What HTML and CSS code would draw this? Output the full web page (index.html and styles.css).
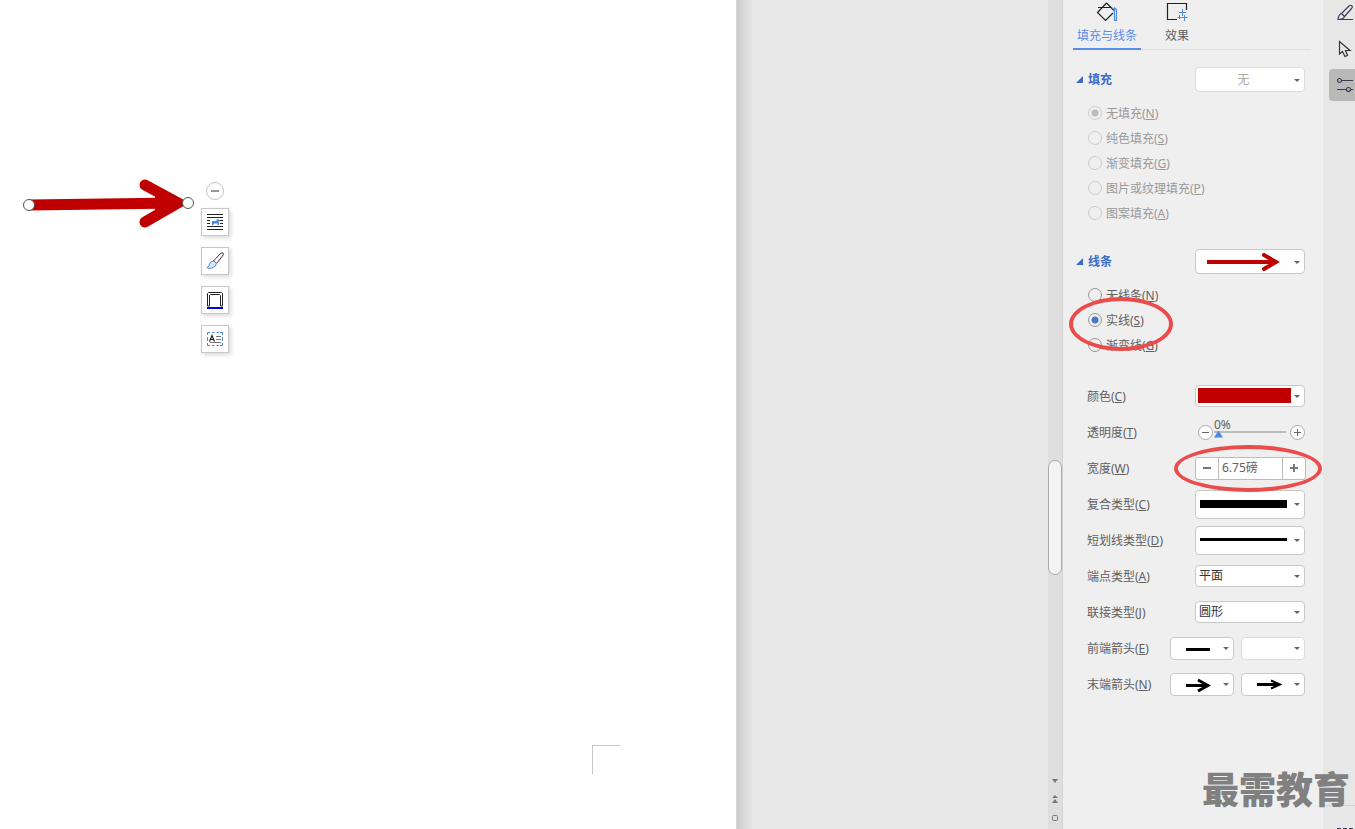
FILE: index.html
```html
<!DOCTYPE html>
<html lang="zh-CN">
<head>
  <meta charset="UTF-8">
  <title>填充与线条</title>
  <link rel="stylesheet" href="styles.css">
</head>
<body>
  <main class="workspace">
    <div class="page">
      <svg class="shape" width="176" height="56" viewBox="0 0 176 56">
        <path d="M8 29 L156 27" stroke="#c00000" stroke-width="11" fill="none"/>
        <path d="M124 9 L157 27 L124 46" stroke="#c00000" stroke-width="11" stroke-linecap="round" fill="none"/>
        <path d="M134 20 L163 27 L134 34z" fill="#c00000"/>
        <circle cx="8" cy="29" r="5.5" fill="#fff" stroke="#555"/>
        <circle cx="167" cy="27" r="5.5" fill="#fff" stroke="#555"/>
      </svg>

      <div class="float-tools">
        <button class="collapse" aria-label="收起"></button>
        <button class="tool" aria-label="布局选项">
          <svg width="16" height="16" viewBox="0 0 16 16">
            <path d="M0 .5h16M0 3.500h16M0 6.500h3M13 6.500h3M0 9.500h3M13 9.500h3M0 12.500h16M0 15.500h16" stroke="#222"/>
            <path d="M5 7h4.500V5.500h1V5h1v1h1.500v1h-1v4h-1.500V9.500H7V10L6 11H5V9.500z" fill="#4f87dc"/>
          </svg>
        </button>
        <button class="tool" aria-label="形状样式">
          <svg width="18" height="18" viewBox="0 0 18 18">
            <path d="M7.500 9 L14 2 Q16 0 17 1 Q18 2 16.500 4 L10.500 11.500z" fill="#fff" stroke="#333"/>
            <path d="M7.500 9 Q4 9.500 3.500 12 Q3 15 .8 15.500 Q3 17 6 16 Q10 15 10.500 11.500z" fill="#dbe8fb" stroke="#4f87dc"/>
          </svg>
        </button>
        <button class="tool" aria-label="形状轮廓">
          <svg width="16" height="17" viewBox="0 0 16 17">
            <path d="M.5 14V1.500L1.500 .5H14.500L15.500 1.500V14H13.500V3.500L12.500 2.500H3.500L2.500 3.500V14z" fill="#fff" stroke="#222"/>
            <path d="M0 16h16" stroke="#0000f0" stroke-width="2"/>
          </svg>
        </button>
        <button class="tool" aria-label="编辑文字">
          <svg width="16" height="14" viewBox="0 0 16 14">
            <path d="M.5 3V.5H3M5 .5h2.500M9.500 .5H12M13 .5h2.500V3M15.500 5v4M15.500 11v2.500H13M12 13.500H9.500M7.500 13.500H5M3 13.500H.5V11M.5 9V5" fill="none" stroke="#4f87dc"/>
            <path d="M2.500 9.500L5 3.500 7.500 9.500M3.500 7.500h3" fill="none" stroke="#222" stroke-width="1.200"/>
            <path d="M9 4.500h5M9 7.500h5M3 10.500h11" stroke="#777"/>
          </svg>
        </button>
      </div>

      <div class="crop-mark"></div>
    </div>
  </main>

  <div class="scrollbar">
    <div class="track"><button class="thumb" aria-label="滚动"></button></div>
    <button aria-label="向下"><svg width="6" height="4"><path d="M0 0h6L3 4z"/></svg></button>
    <button aria-label="上一页"><svg width="6" height="8"><path d="M0 3h6L3 0zM0 8h6L3 4z"/></svg></button>
    <button aria-label="选择浏览对象"><svg width="6" height="6"><rect class="ring" x=".5" y=".5" width="5" height="5" rx="1"/></svg></button>
  </div>

  <aside class="panel">
    <nav class="tabs">
      <button class="tab active">
        <svg width="22" height="20" viewBox="0 0 22 20">
          <path d="M2 5.500h13M10.500 1L18 8.500 M17 11L9.500 18.500 1.500 10.500 10.500 1" fill="none" stroke="#222" stroke-width="1.200"/>
          <path d="M16 6L18.500 7.500V18.500H20.500V7.500L18 5.500" fill="none" stroke="#4f87dc" stroke-width="1.200"/>
        </svg>
        填充与线条
      </button>
      <button class="tab">
        <svg width="22" height="20" viewBox="0 0 22 20">
          <path d="M20.500 8V1.500H1.500V17.500H11" fill="none" stroke="#222" stroke-width="1.200"/>
          <path d="M16.500 7v7M13 10.500h7M18.500 13v6M15.500 15.500h6M13.500 13v4M11.500 15.500h4" stroke="#4f87dc" fill="none"/>
        </svg>
        效果
      </button>
    </nav>

    <section class="group">
      <header class="group-head">
        <h2>填充</h2>
        <div class="picker pale">
          <select class="centered" aria-label="填充" disabled><option>无</option></select>
        </div>
      </header>
      <fieldset class="radios" disabled>
        <label><input type="radio" name="fill" checked>无填充(<u>N</u>)</label>
        <label><input type="radio" name="fill">纯色填充(<u>S</u>)</label>
        <label><input type="radio" name="fill">渐变填充(<u>G</u>)</label>
        <label><input type="radio" name="fill">图片或纹理填充(<u>P</u>)</label>
        <label><input type="radio" name="fill">图案填充(<u>A</u>)</label>
      </fieldset>
    </section>

    <section class="group">
      <header class="group-head">
        <h2>线条</h2>
        <div class="picker">
          <select aria-label="线条"><option></option></select>
          <svg class="sample" width="74" height="18" viewBox="0 0 74 18">
            <path d="M0 9h70" stroke="#c00000" stroke-width="4"/>
            <path d="M57 2L69 9 57 16" fill="none" stroke="#c00000" stroke-width="4" stroke-linecap="round"/>
          </svg>
        </div>
      </header>
      <fieldset class="radios">
        <label><input type="radio" name="line">无线条(<u>N</u>)</label>
        <label><input type="radio" name="line" checked>实线(<u>S</u>)</label>
        <label><input type="radio" name="line">渐变线(<u>G</u>)</label>
        <span class="mark mark-line"></span>
      </fieldset>
    </section>

    <div class="props">
      <div class="prop">
        <label for="color">颜色(<u>C</u>)</label>
        <div class="picker short">
          <select id="color"><option></option></select>
          <span class="swatch"></span>
        </div>
      </div>
      <div class="prop">
        <label for="alpha">透明度(<u>T</u>)</label>
        <div class="slider">
          <button class="round" aria-label="减少"></button>
          <input type="range" id="alpha" min="0" max="100" value="0">
          <output for="alpha">0%</output>
          <button class="round plus" aria-label="增加"></button>
        </div>
      </div>
      <div class="prop">
        <label for="width">宽度(<u>W</u>)</label>
        <div class="stepper">
          <button aria-label="减小宽度"></button>
          <input type="text" id="width" value="6.75磅">
          <button class="plus" aria-label="增大宽度"></button>
        </div>
        <span class="mark mark-width"></span>
      </div>
      <div class="prop">
        <label for="compound">复合类型(<u>C</u>)</label>
        <div class="picker tall">
          <select id="compound"><option></option></select>
          <svg class="sample line" width="87" height="8"><path d="M0 4h87" stroke="#000" stroke-width="8"/></svg>
        </div>
      </div>
      <div class="prop">
        <label for="dash">短划线类型(<u>D</u>)</label>
        <div class="picker tall">
          <select id="dash"><option></option></select>
          <svg class="sample line" width="87" height="8"><path d="M0 3.500h87" stroke="#000" stroke-width="3"/></svg>
        </div>
      </div>
      <div class="prop">
        <label for="cap">端点类型(<u>A</u>)</label>
        <div class="picker short">
          <select id="cap"><option>平面</option></select>
        </div>
      </div>
      <div class="prop">
        <label for="join">联接类型(<u>J</u>)</label>
        <div class="picker short">
          <select id="join"><option>圆形</option></select>
        </div>
      </div>
      <div class="prop">
        <label for="head">前端箭头(<u>E</u>)</label>
        <div class="pair">
          <div class="picker small">
            <select id="head"><option></option></select>
            <svg class="sample tip" width="25" height="14"><path d="M0 7.500h24" stroke="#000" stroke-width="3"/></svg>
          </div>
          <div class="picker small pale">
            <select aria-label="前端箭头大小"><option></option></select>
          </div>
        </div>
      </div>
      <div class="prop">
        <label for="tail">末端箭头(<u>N</u>)</label>
        <div class="pair">
          <div class="picker small">
            <select id="tail"><option></option></select>
            <svg class="sample tip" width="25" height="14"><path d="M0 7.500h22M12 2L22 7.500 12 13" fill="none" stroke="#000" stroke-width="3"/></svg>
          </div>
          <div class="picker small">
            <select aria-label="末端箭头大小"><option></option></select>
            <svg class="sample tip" width="25" height="14"><path d="M0 6.500h22" stroke="#000" stroke-width="3"/><path d="M14 2.500L23 6.500 14 10.500" fill="none" stroke="#000" stroke-width="2"/></svg>
          </div>
        </div>
      </div>
    </div>
  </aside>

  <nav class="rail">
    <button aria-label="样式">
      <svg width="18" height="18" viewBox="0 0 18 18">
        <path d="M5.500 9.500L13 2Q15 .5 16 2 17 3 15.500 4.500L8.500 12.500zM5.500 9.500Q2.500 10.500 2 15.500H17M2 15.500Q7.500 15.500 8.500 12.500" fill="none" stroke="#3d3d55" stroke-width="1.200"/>
      </svg>
    </button>
    <button aria-label="选择">
      <svg width="18" height="18" viewBox="0 0 18 18">
        <path d="M3.500 1.500V14L6.500 11.500 9 16.500 11.500 15.500 9.500 10.500H14z" fill="none" stroke="#333" stroke-width="1.200"/>
      </svg>
    </button>
    <button class="active" aria-label="属性">
      <svg width="18" height="18" viewBox="0 0 18 18">
        <path d="M6 4.500h11M1 13.500h9M15 13.500h2" stroke="#3d3d55" stroke-width="1.200"/>
        <circle cx="3.500" cy="4.500" r="2" fill="none" stroke="#3d3d55" stroke-width="1.200"/>
        <circle cx="12.500" cy="13.500" r="2" fill="none" stroke="#3d3d55" stroke-width="1.200"/>
      </svg>
    </button>
    <button class="more" aria-label="更多">
      <svg width="18" height="1"><path d="M1 .5h4M7 .5h4M13 .5h4" stroke="#3d3d55"/></svg>
    </button>
  </nav>

  <div class="watermark">最需教育</div>
</body>
</html>
```
FILE: styles.css
```css
:root {
  --bg: #e7e7e7;
  --panel: #efefef;
  --border: #c8c8c8;
  --text: #606060;
  --blue: #3a6bc5;
  --red: #c00000;
}

* {
  box-sizing: border-box;
}

body {
  margin: 0;
  min-height: 100vh;
  display: flex;
  position: relative;
  overflow: hidden;
  background: var(--bg);
  color: var(--text);
  font-family: "Noto Sans", "Noto Sans CJK SC", sans-serif;
  font-size: 12px;
  line-height: 18px;
}

button,
input,
select {
  font: inherit;
  color: inherit;
  margin: 0;
  padding: 0;
}

button {
  border: none;
  background: none;
}

svg {
  display: block;
}

/* document area */
.workspace {
  flex: 1;
  display: flex;
}

/* edge shadow runs the full height of the page */
.workspace::after {
  content: "";
  width: 311px;
  background: linear-gradient(to right, #cbcbcb, #e7e7e7 16px);
}

.page {
  flex: 1;
  position: relative;
  background: #fff;
  border-right: 1px solid #d6d6d6;
}

.shape {
  position: absolute;
  left: 21px;
  top: 176px;
}

.float-tools {
  position: absolute;
  left: 201px;
  top: 182px;
  display: flex;
  flex-direction: column;
  align-items: center;
  gap: 11px;
}

.collapse {
  width: 18px;
  height: 18px;
  margin-bottom: -3px;
  border: 1px solid #c4c4c4;
  border-radius: 50%;
  background: linear-gradient(#999, #999) center / 8px 2px no-repeat #fff;
}

.tool {
  width: 28px;
  height: 28px;
  display: flex;
  align-items: center;
  justify-content: center;
  background: #fff;
  border: 1px solid var(--border);
  box-shadow: 2px 2px 4px rgba(0, 0, 0, 0.15);
}

.crop-mark {
  position: absolute;
  right: 116px;
  bottom: 55px;
  width: 28px;
  height: 29px;
  border-top: 1px solid #c6c6c6;
  border-left: 1px solid #c6c6c6;
}

/* vertical scrollbar */
.scrollbar {
  width: 15px;
  display: flex;
  flex-direction: column;
  align-items: center;
  gap: 12px;
  padding-bottom: 8px;
  background: #dedede;
  border-right: 1px solid #d4d4d4;
}

.track {
  flex: 1;
  width: 100%;
  padding-top: 460px;
}

.thumb {
  width: 14px;
  height: 115px;
  border: 1px solid #aaa;
  border-radius: 7px;
  background: #f3f3f3;
}

.scrollbar path {
  fill: #777;
}

.ring {
  fill: none;
  stroke: #777;
}

/* format panel */
.panel {
  width: 260px;
  background: var(--panel);
}

.tabs {
  display: flex;
  gap: 24px;
  height: 50px;
  margin: 0 12px 17px 10px;
  border-bottom: 1px solid #dedede;
}

.tab {
  display: flex;
  flex-direction: column;
  align-items: center;
  gap: 5px;
  height: 50px;
  padding-top: 2px;
}

.tab svg {
  flex-shrink: 0;
}

.tab.active {
  padding: 2px 4px 0;
  color: #5a8de6;
  border-bottom: 2px solid #5a8de6;
}

.group {
  margin-bottom: 23px;
  padding: 0 18px 0 13px;
}

.group-head {
  display: flex;
  align-items: center;
  justify-content: space-between;
  margin-bottom: 9px;
}

h2 {
  display: flex;
  align-items: center;
  gap: 5px;
  margin: 0;
  font-size: 12px;
  font-weight: 600;
  color: var(--blue);
}

h2::before {
  content: "";
  width: 7px;
  height: 7px;
  background: var(--blue);
  clip-path: polygon(100% 0, 100% 100%, 0 100%);
}

.radios {
  position: relative;
  margin: 0;
  padding: 0 0 0 12px;
  border: none;
}

.radios label {
  display: flex;
  align-items: center;
  height: 25px;
}

.radios input {
  appearance: none;
  width: 14px;
  height: 14px;
  margin: 0 4px 2px 0;
  border: 1px solid #999;
  border-radius: 50%;
}

.radios input:checked {
  background: radial-gradient(circle, #4878c8 3px, transparent 4px);
}

.radios:disabled {
  color: #999;
}

.radios:disabled input {
  border-color: #ccc;
}

.radios:disabled input:checked {
  background: radial-gradient(circle, #bbb 3px, transparent 4px);
}

/* drop-downs */
.picker {
  position: relative;
  width: 110px;
  height: 25px;
}

.picker select {
  appearance: none;
  display: block;
  width: 100%;
  height: 100%;
  padding: 0 16px 0 3px;
  border: 1px solid var(--border);
  border-radius: 4px;
  background: #fff;
  color: #333;
}

.picker::after {
  content: "";
  position: absolute;
  right: 5px;
  top: calc(50% - 1px);
  border: 3px solid transparent;
  border-top-color: #666;
  border-bottom: none;
}

.picker select.centered {
  text-align: center;
  text-align-last: center;
  color: #aaa;
  opacity: 1;
}

.picker.pale select {
  border-color: #dcdcdc;
}

.picker.short {
  height: 22px;
}

.picker.tall {
  height: 29px;
}

.picker.small {
  width: 64px;
  height: 23px;
}

.sample,
.swatch {
  position: absolute;
  pointer-events: none;
}

.sample {
  left: 12px;
  top: 4px;
}

.sample.line {
  left: 5px;
  top: 10px;
}

.sample.tip {
  left: 16px;
  top: 5px;
}

.swatch {
  left: 3px;
  top: 3px;
  width: 93px;
  height: 15px;
  background: var(--red);
}

/* line properties */
.props {
  margin-top: -3px;
  padding: 0 18px 0 24px;
}

.prop {
  position: relative;
  display: flex;
  align-items: center;
  justify-content: space-between;
  height: 36px;
}

.prop label {
  padding-top: 2px;
}

.pair {
  display: flex;
  gap: 7px;
}

.slider {
  position: relative;
  display: flex;
  align-items: center;
  width: 107px;
}

.slider input {
  appearance: none;
  flex: 1;
  min-width: 0;
  height: 14px;
  margin: 0 4px 0 1px;
  background: linear-gradient(#bbb, #bbb) center / 100% 2px no-repeat;
}

.slider input::-webkit-slider-thumb {
  appearance: none;
  width: 9px;
  height: 7px;
  margin-top: 4px;
  background: #4f87dc;
  clip-path: polygon(50% 0, 100% 100%, 0 100%);
}

.slider output {
  position: absolute;
  left: 16px;
  bottom: 6px;
}

.round {
  width: 15px;
  height: 15px;
  border: 1px solid #aaa;
  border-radius: 50%;
  background: linear-gradient(#666, #666) center / 7px 1px no-repeat #fff;
}

.round.plus {
  background:
    linear-gradient(#666, #666) center / 7px 1px no-repeat,
    linear-gradient(#666, #666) center / 1px 7px no-repeat,
    #fff;
}

.stepper {
  display: flex;
  width: 111px;
  height: 23px;
  margin-right: -1px;
  border: 1px solid #bbb;
  border-radius: 3px;
  background: #fff;
}

.stepper button {
  width: 22px;
  background: linear-gradient(#777, #777) center / 8px 2px no-repeat;
}

.stepper button.plus {
  background:
    linear-gradient(#777, #777) center / 8px 2px no-repeat,
    linear-gradient(#777, #777) center / 2px 8px no-repeat;
}

.stepper input {
  flex: 1;
  min-width: 0;
  padding: 0 3px;
  border: solid #bbb;
  border-width: 0 1px;
}

/* hand-drawn highlights */
.mark {
  position: absolute;
  z-index: 1;
  border: 4px solid #ec4b4b;
  border-radius: 50%;
  pointer-events: none;
}

.mark-line {
  left: -7px;
  top: 14px;
  width: 104px;
  height: 54px;
}

.mark-width {
  right: -17px;
  top: -5px;
  width: 148px;
  height: 47px;
}

/* right icon rail */
.rail {
  width: 32px;
  display: flex;
  flex-direction: column;
  align-items: flex-end;
  gap: 4px;
}

.rail button {
  display: flex;
  align-items: center;
  width: 26px;
  height: 32px;
  padding-left: 7px;
}

.rail button:first-child {
  height: 29px;
  padding-bottom: 3px;
}

.rail .active {
  background: #b9b9b9;
  border-radius: 4px 0 0 4px;
}

.rail .more {
  width: 100%;
  height: 24px;
  margin-top: auto;
  padding-left: 13px;
  align-items: flex-end;
  border-top: 1px solid #d2d2d2;
}

.watermark {
  position: absolute;
  right: 5px;
  bottom: 12px;
  font-size: 37px;
  line-height: 54px;
  font-weight: 900;
  color: #808080;
}
```
